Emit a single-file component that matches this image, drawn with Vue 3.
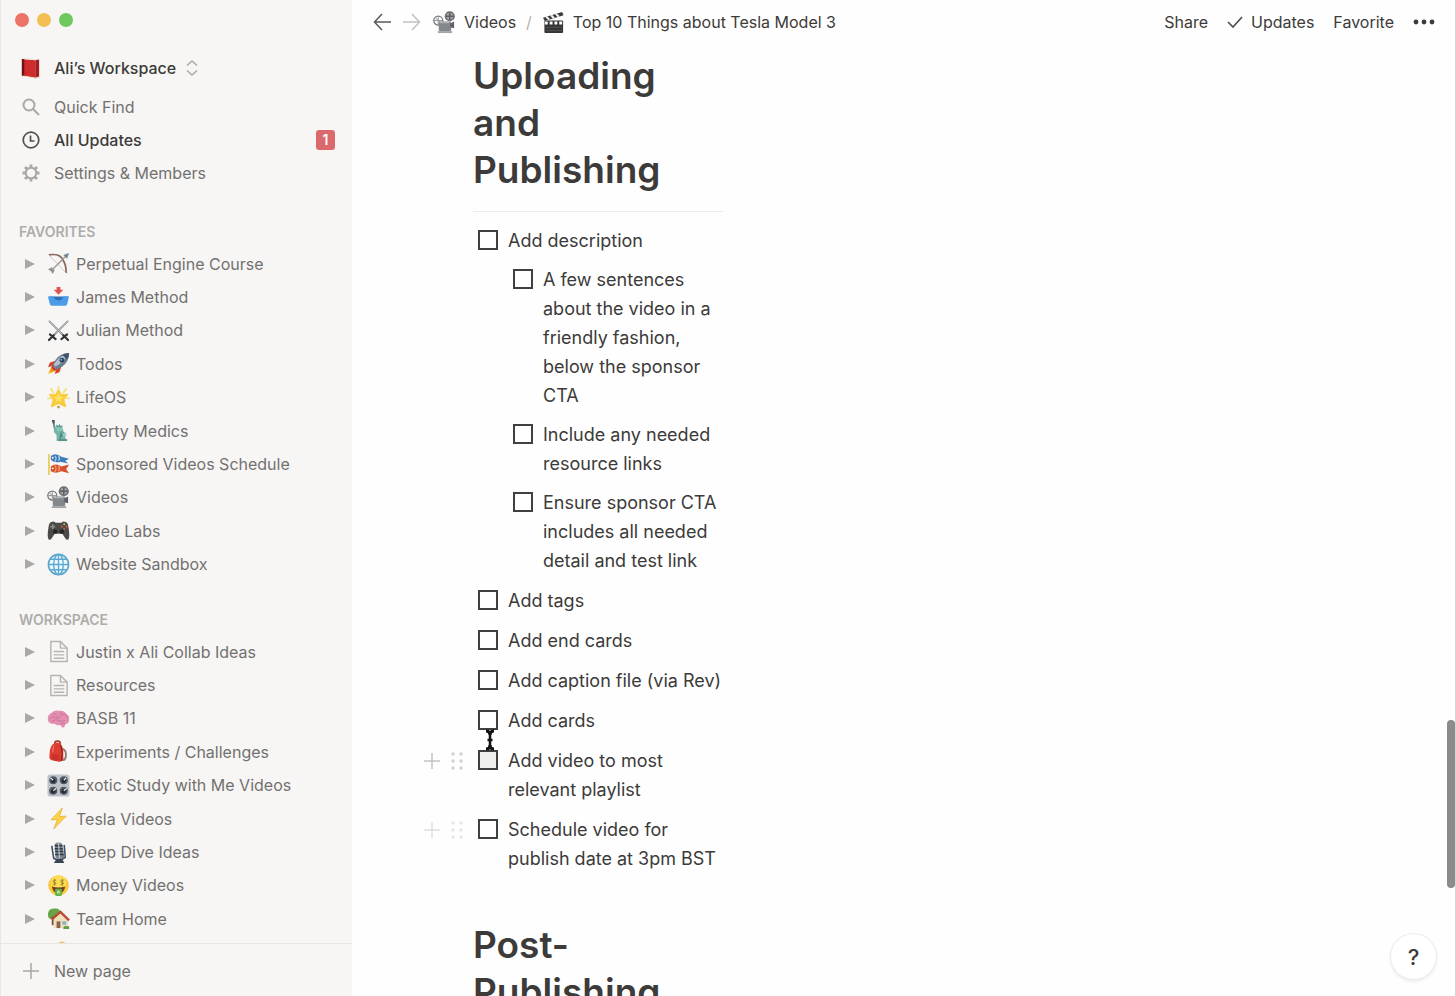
<script setup>
import { ref } from 'vue'

// 24x24 artwork for the page icons
const art = {
  book: `<path d="M3 2 L17 3.500 L17 22 L3 19.500 Z" fill="#cf2a2c"/><path d="M3 2 L6 1 L21 2.500 L17 3.500 Z" fill="#e8e0d8"/><path d="M17 3.500 L21 2.500 L21 21 L17 22.500 Z" fill="#a51c20"/><path d="M3 2 L5.500 2.300 L5.500 20 L3 19.500 Z" fill="#6d1215"/><path d="M4 19.800 L17 22 L21 20.700" stroke="#efe6dc" stroke-width="1" fill="none"/>`,
  bow: `<path d="M2 3 Q14 1 17 9 Q20 13 20 22" fill="none" stroke="#8a6a60" stroke-width="1.800"/><path d="M2 3 L20 22" stroke="#c9b7b3" stroke-width=".8"/><path d="M5 19 L20 4" stroke="#a0989a" stroke-width="1.500"/><path d="M23 1 L17 3 L21 7 Z" fill="#77878f"/><path d="M1 18 L5 16 L8 19 L6 23 L4 20 Z" fill="#9b9496"/>`,
  inbox: `<path d="M10 1 H14 V4 H17 L12 9 L7 4 H10 Z" fill="#e3534e"/><path d="M2 11 H22 L20 17 H4 Z" fill="#2f6fb4"/><path d="M1 11 H7 Q8 15 12 15 Q16 15 17 11 H23 L21 19 Q20.500 20.500 19 20.500 H5 Q3.500 20.500 3 19 Z" fill="#4b9be8"/>`,
  swords: `<path d="M2 2 L18 18 M22 2 L6 18" stroke="#8d9092" stroke-width="1.900"/><path d="M2 2 L15 15 M22 2 L9 15" stroke="#d7d9da" stroke-width=".6"/><path d="M3 16 L9 21 M21 16 L15 21 M7 17 L2 22 M17 17 L22 22" stroke="#333335" stroke-width="2.200" stroke-linecap="round"/>`,
  rocket: `<path d="M4 16 L1 23 L9 20 Z" fill="#f6c52e"/><path d="M5 16 L3 21 L8 19 Z" fill="#f47d27"/><path d="M9 9 L3 11 L1 16 L7 14 Z M15 15 L13 21 L8 23 L10 17 Z" fill="#d9442e"/><path d="M23 1 Q14 1 9 8 L5.500 14 L10 18.500 L16 15 Q23 10 23 1 Z" fill="#6c7e90"/><path d="M22 2 Q15 3 10 9 L7 13 L9 15 Q17 11 22 2 Z" fill="#b6c1ca"/><path d="M23 1 Q19 1 16 3 L21 8 Q23 5 23 1 Z" fill="#40556b"/><circle cx="15.500" cy="8.500" r="2.500" fill="#263e5a"/><circle cx="15" cy="8" r="1" fill="#7cb6dd"/><path d="M5 15 L9 19" stroke="#b8322b" stroke-width="2"/>`,
  star: `<path d="M12 4 L14.500 9.500 L21 9 L17 14 L19 21 L12 17.500 L5 21 L7 14 L3 9 L9.500 9.500 Z" fill="#f8cc3e" stroke="#f8cc3e" stroke-width="2" stroke-linejoin="round"/><path d="M12 7 L13.500 11 L17 11.500 L14 14 L15 17 L12 15.500 L9 17 L10 14 L7 11.500 L10.500 11 Z" fill="#fbe45f"/><path d="M12 1 V4 M4 3 L7 7 M20 3 L17 7 M1 13 H4 M23 13 H20" stroke="#f4df7d" stroke-width="1.800" stroke-linecap="round"/><circle cx="12" cy="22" r="1.500" fill="#c99b38"/>`,
  liberty: `<path d="M7 5 L9 14" stroke="#5d958c" stroke-width="2"/><path d="M5 1 L8 1 L8 5 L6 5 Z" fill="#3d5755"/><path d="M8 9 L12 8 L16 9 L18 15 L20 23 H10 L10 17 L7 13 Z" fill="#76b5a9"/><circle cx="13" cy="10" r="3" fill="#88c7ba"/><path d="M9 8 L10 6 L12 7 L13 5 L14 7 L17 7 L15 9 Z" fill="#5d9e92"/><path d="M15 13 L13 23 M18 14 L14 19" stroke="#4b857c" stroke-width="1.200"/><path d="M16 15 L20 14 L20 18 L17 18 Z" fill="#98cfc4"/><path d="M12 22 H21" stroke="#579186" stroke-width="2"/>`,
  koi: `<path d="M2 1 V23" stroke="#e8c33b" stroke-width="1.500"/><path d="M4 3 Q9 -1 15 4 L23 6 L19 8 L22 11 L14 9 Q8 11 4 7 Z" fill="#3d7dba"/><path d="M8 3 Q11 5 8 9 M12 3 Q14 5 12 8" stroke="#b7d7f0" stroke-width="1.200" fill="none"/><path d="M4 14 Q9 10 15 14 L23 12 L20 17 L23 21 L15 19 Q9 22 4 19 Z" fill="#d9502f"/><path d="M8 13 Q11 16 8 20 M12 13 Q14 16 12 19" stroke="#f2a56f" stroke-width="1.200" fill="none"/><circle cx="6" cy="5" r="1" fill="#fff"/><circle cx="6" cy="16" r="1" fill="#fff"/>`,
  projector: `<circle cx="17.500" cy="5.500" r="5.300" fill="#6c6e71"/><circle cx="17.500" cy="5.500" r="3.600" fill="#a2a5a8"/><path d="M17.500 1.500 V9.500 M13.500 5.500 H21.500" stroke="#5d5f62" stroke-width="1.500"/><circle cx="5.500" cy="10" r="4.700" fill="none" stroke="#77797c" stroke-width="1.300"/><path d="M5.500 5.500 V14.500 M1 10 H10 M2.500 7 L8.500 13" stroke="#8f9295" stroke-width="1"/><rect x="6" y="11" width="13" height="10" rx="1.500" fill="#84888d"/><path d="M7 12 H17" stroke="#b1b5b9" stroke-width="1.500"/><path d="M18 13 L22 11 V18 L18 17 Z" fill="#5e6165"/><path d="M5 21 H20 V23 H5 Z" fill="#a2a5a8"/>`,
  gamepad: `<path d="M5 3 Q7 2 9 4 H15 Q17 2 19 3 Q22 3 22.500 9 Q24 18 22.500 21 Q21 22.500 19 20 L16 15.500 H8 L5 20 Q3 22.500 1.500 21 Q0 18 1.500 9 Q2 3 5 3 Z" fill="#4b4a48"/><path d="M3.500 8 H8.500 M6 5.500 V10.500" stroke="#8b8a86" stroke-width="1.700"/><circle cx="18" cy="5.500" r="1.100" fill="#b3c055"/><circle cx="20.500" cy="8" r="1.100" fill="#d8504a"/><circle cx="15.500" cy="8" r="1.100" fill="#c55449"/><circle cx="18" cy="10.500" r="1.100" fill="#c0575a"/><circle cx="8.500" cy="13" r="2.300" fill="#252525"/><circle cx="15.500" cy="13" r="2.300" fill="#252525"/>`,
  globe: `<circle cx="12" cy="12" r="10.500" fill="#edf8fd" stroke="#5ba8cf" stroke-width="1.700"/><ellipse cx="12" cy="12" rx="5" ry="10.500" fill="none" stroke="#5ba8cf" stroke-width="1.400"/><path d="M12 1.500 V22.500 M1.500 12 H22.500 M3.500 6.500 H20.500 M3.500 17.500 H20.500" stroke="#5ba8cf" stroke-width="1.400"/>`,
  page: `<path d="M4 1.500 H14 L21 8.500 V22.500 H4 Z" fill="none" stroke="#b7b5b2" stroke-width="1.500"/><path d="M14 1.500 V8.500 H21 M7 12 H18 M7 15.500 H18 M7 19 H18" fill="none" stroke="#b7b5b2" stroke-width="1.500"/>`,
  brain: `<path d="M1 14 Q0 8 5 6 Q8 2.500 13 4 Q18 3.500 20 7 Q24 9 23 14 Q23 17 19 18 L18 21 Q15 22.500 14 18.500 Q10 20 8 17.500 Q2 18 1 14 Z" fill="#e58fb0"/><path d="M3 12 Q6 9 9 11 T15 9 M6 7 Q9 7 10 9 M14 5 Q14 8 18 8 T21 12 M5 15 Q9 12 12 14 T19 14 M14 18 Q16 16 19 18" fill="none" stroke="#c9719a" stroke-width="1"/>`,
  backpack: `<path d="M16 9 Q21 11 19.500 18 Q19 21 16 21" fill="none" stroke="#987b70" stroke-width="2"/><path d="M8 4 Q8 1 11 1 Q14 1 14 4" fill="none" stroke="#a82a22" stroke-width="1.700"/><path d="M3 11 Q4 3 11 2.500 Q16 3.500 17 11 L17 20 Q16 23 11 22.500 L5 21 Q2 20 2.500 17 Z" fill="#dc3d2f"/><path d="M5 14 Q10 16 13 15 L13 21 Q9 22 5 20 Z" fill="#c9332a"/><path d="M7 6 Q6 10 6 13" stroke="#ef7a67" stroke-width="1.200" fill="none"/><path d="M14 5 Q17 12 15 22" stroke="#8f1e1a" stroke-width="1.200" fill="none"/>`,
  knobs: `<rect x=".5" y=".5" width="23" height="23" rx="3" fill="#bfc3c9"/><circle cx="6.500" cy="6.500" r="4.200" fill="#515a64"/><circle cx="17.500" cy="6.500" r="4.200" fill="#515a64"/><circle cx="6.500" cy="17.500" r="4.200" fill="#515a64"/><circle cx="17.500" cy="17.500" r="4.200" fill="#515a64"/><circle cx="6.500" cy="7" r="2.300" fill="#24292f"/><circle cx="17.500" cy="7" r="2.300" fill="#24292f"/><circle cx="6.500" cy="18" r="2.300" fill="#24292f"/><circle cx="17.500" cy="18" r="2.300" fill="#24292f"/><path d="M6.500 6.500 L3.500 4 M17.500 6.500 L20 4 M6.500 17.500 L9.500 15 M17.500 17.500 L20.500 15" stroke="#eef0f2" stroke-width="1.200"/>`,
  bolt: `<path d="M16 1 L4 13.500 L11 13 L7 23 L20 9.500 L13 10 Z" fill="#fbd345" stroke="#ecaf3e" stroke-width=".9" stroke-linejoin="round"/>`,
  mic: `<path d="M8 3 Q12 0 16 3 L18 17 Q14 20 9 18 Z" fill="#7d868f"/><path d="M8 5 H16 M8 8 H16.500 M8.500 11 H17 M8.500 14 H17.500" stroke="#2d3946" stroke-width="1.600"/><path d="M5 5 L7 18 Q13 22 19 17 L18 4" fill="none" stroke="#445263" stroke-width="1.700"/><path d="M12 2 L13 18" stroke="#cfd4d9" stroke-width="1"/><path d="M10 19 H16 L18 23 H7 Z" fill="#384553"/>`,
  money: `<circle cx="12" cy="12" r="10.800" fill="#f9cb3c"/><circle cx="12" cy="9.500" r="8" fill="#fcdd55"/><path d="M5 13 Q12 15 19 13 Q18 20 12 20 Q6 20 5 13 Z" fill="#754020"/><rect x="8.500" y="15.500" width="7" height="7.500" rx="1.500" fill="#61b34c"/><path d="M9.500 6.500 Q6.500 5.500 6.500 7.500 T9 9.500 T6 11 M8 5 V12.500 M17.500 6.500 Q14.500 5.500 14.500 7.500 T17 9.500 T14 11 M16 5 V12.500" fill="none" stroke="#a08527" stroke-width="1"/><circle cx="12" cy="19" r="1.700" fill="#b2dd8e"/>`,
  home: `<path d="M1 8 Q1 1 8 1.500 Q14 1 14 7 Q12 13 6 13 Q1 13 1 8 Z" fill="#66a445"/><path d="M6 10 V19" stroke="#7a4b2e" stroke-width="2"/><path d="M7 12 L14 6 L22 13 V22 H7 Z" fill="#efe0bd"/><path d="M5 13 L14 5 L23 14" fill="none" stroke="#b94c37" stroke-width="2.500"/><rect x="10" y="15" width="4" height="7" fill="#90644a"/><rect x="16" y="15" width="4" height="3.500" fill="#7fb3cf"/><path d="M17 23 Q17 19 20 20 Q24 19 23 23 Z" fill="#669c47"/>`,
  hand: `<path d="M12 2 Q16 -1 19 2 L20 8 Q20 16 14 18 H8 L5 10 Z" fill="#efc75f"/>`,
  clapper: `<path d="M1 7 L21 1 L22.500 4.500 L3 10.500 Z" fill="#3b3b3b"/><path d="M4.500 6 L7.500 9 M9.500 4.500 L12.500 7.500 M14.500 3 L17.500 6" stroke="#f1f1f1" stroke-width="2.200"/><rect x="2.500" y="10" width="19.500" height="13" rx="1" fill="#353535"/><path d="M3 12.500 H22" stroke="#fff" stroke-width="3" stroke-dasharray="3 2"/><path d="M4 17 H21 M4 20.500 H21" stroke="#5a5b5c" stroke-width=".8"/>`,
}

const favorites = [
  { icon: 'bow', title: 'Perpetual Engine Course' },
  { icon: 'inbox', title: 'James Method' },
  { icon: 'swords', title: 'Julian Method' },
  { icon: 'rocket', title: 'Todos' },
  { icon: 'star', title: 'LifeOS' },
  { icon: 'liberty', title: 'Liberty Medics' },
  { icon: 'koi', title: 'Sponsored Videos Schedule' },
  { icon: 'projector', title: 'Videos' },
  { icon: 'gamepad', title: 'Video Labs' },
  { icon: 'globe', title: 'Website Sandbox' },
]

const workspace = [
  { icon: 'page', title: 'Justin x Ali Collab Ideas' },
  { icon: 'page', title: 'Resources' },
  { icon: 'brain', title: 'BASB 11' },
  { icon: 'backpack', title: 'Experiments / Challenges' },
  { icon: 'knobs', title: 'Exotic Study with Me Videos' },
  { icon: 'bolt', title: 'Tesla Videos' },
  { icon: 'mic', title: 'Deep Dive Ideas' },
  { icon: 'money', title: 'Money Videos' },
  { icon: 'home', title: 'Team Home' },
  { icon: 'hand', title: '' },
]

const sections = [
  { name: 'FAVORITES', pages: favorites },
  { name: 'WORKSPACE', pages: workspace },
]

const todos = ref([
  {
    text: 'Add description',
    done: false,
    children: [
      { text: 'A few sentences about the video in a friendly fashion, below the sponsor CTA', done: false },
      { text: 'Include any needed resource links', done: false },
      { text: 'Ensure sponsor CTA includes all needed detail and test link', done: false },
    ],
  },
  { text: 'Add tags', done: false },
  { text: 'Add end cards', done: false },
  { text: 'Add caption file (via Rev)', done: false },
  { text: 'Add cards', done: false, cursor: true },
  { text: 'Add video to most relevant playlist', done: false, handles: true, hovered: true },
  { text: 'Schedule video for publish date at 3pm BST', done: false, handles: true, fading: true },
])
</script>

<template>
  <div class="window">
    <aside class="sidebar">
      <div class="lights">
        <button class="light red" aria-label="Close"></button>
        <button class="light yellow" aria-label="Minimize"></button>
        <button class="light green" aria-label="Zoom"></button>
      </div>

      <button class="switcher">
        <svg class="emoji" viewBox="0 0 24 24" v-html="art.book" />
        <span>Ali’s Workspace</span>
        <svg class="updown" viewBox="0 0 12 18" fill="none">
          <path d="M1 6.500 L6 2 L11 6.500 M1 11.500 L6 16 L11 11.500" stroke="#aaa8a5" stroke-width="1.500" />
        </svg>
      </button>

      <nav class="shortcuts">
        <a href="#" class="shortcut">
          <svg class="glyph" viewBox="0 0 18 18" fill="none" stroke="#aaa8a5" stroke-width="2">
            <circle cx="7" cy="7" r="5.500" />
            <path d="M11 11 L17 17" />
          </svg>
          <span>Quick Find</span>
        </a>
        <a href="#" class="shortcut active">
          <svg class="glyph" viewBox="0 0 18 18" fill="none" stroke="#50504e" stroke-width="1.700">
            <circle cx="9" cy="9" r="7.800" />
            <path d="M8.500 4.500 V10 H12.500" />
          </svg>
          <span>All Updates</span>
          <b class="badge">1</b>
        </a>
        <a href="#" class="shortcut">
          <svg class="glyph" viewBox="0 0 18 18" fill="none" stroke="#aaa8a5">
            <circle cx="9" cy="9" r="5.300" stroke-width="2" />
            <path
              d="M9 .5 V3.500 M9 14.500 V17.500 M.5 9 H3.500 M14.500 9 H17.500 M3 3 L5 5 M13 13 L15 15 M3 15 L5 13 M13 5 L15 3"
              stroke-width="2.800"
            />
          </svg>
          <span>Settings &amp; Members</span>
        </a>
      </nav>

      <div class="tree">
        <section v-for="section in sections" :key="section.name">
          <h2 class="section-title">{{ section.name }}</h2>
          <ul class="pages">
            <li v-for="(page, i) in section.pages" :key="i" class="page">
              <button class="toggle" aria-label="Expand">
                <svg viewBox="0 0 10 10"><path d="M0 0 L10 5 L0 10 Z" fill="#aaa8a5" /></svg>
              </button>
              <a href="#" class="page-link">
                <svg class="emoji" viewBox="0 0 24 24" v-html="art[page.icon]" />
                <span>{{ page.title }}</span>
              </a>
            </li>
          </ul>
        </section>
      </div>

      <button class="new-page">
        <svg class="glyph" viewBox="0 0 18 18" stroke="#aaa8a5" stroke-width="1.500">
          <path d="M9 1 V17 M1 9 H17" />
        </svg>
        <span>New page</span>
      </button>
    </aside>

    <main class="main">
      <header class="topbar">
        <button class="arrow" aria-label="Back">
          <svg viewBox="0 0 18 18" fill="none" stroke="#5a5957" stroke-width="1.500">
            <path d="M18 9 H1.500 M9 1 L1.500 9 L9 17" />
          </svg>
        </button>
        <button class="arrow" aria-label="Forward">
          <svg viewBox="0 0 18 18" fill="none" stroke="#c2c1bf" stroke-width="1.500">
            <path d="M0 9 H16.500 M9 1 L16.500 9 L9 17" />
          </svg>
        </button>
        <a href="#" class="crumb">
          <svg class="emoji" viewBox="0 0 24 24" v-html="art.projector" />
          <span>Videos</span>
        </a>
        <span class="slash">/</span>
        <a href="#" class="crumb">
          <svg class="emoji" viewBox="0 0 24 24" v-html="art.clapper" />
          <span>Top 10 Things about Tesla Model 3</span>
        </a>
        <div class="actions">
          <button>Share</button>
          <button class="updates">
            <svg viewBox="0 0 16 12" fill="none"><path d="M1 6 L6 11 L15 1" stroke="#50504e" stroke-width="1.700" /></svg>
            Updates
          </button>
          <button>Favorite</button>
          <button class="more" aria-label="More">
            <svg viewBox="0 0 22 6" fill="#3c3b39">
              <circle cx="3" cy="3" r="2.400" />
              <circle cx="11" cy="3" r="2.400" />
              <circle cx="19" cy="3" r="2.400" />
            </svg>
          </button>
        </div>
      </header>

      <article class="doc">
        <h1>Uploading and Publishing</h1>
        <hr />
        <ul class="todos">
          <li v-for="(todo, i) in todos" :key="i" class="todo">
            <div class="gutter" :class="{ fading: todo.fading }">
              <template v-if="todo.handles">
                <button aria-label="Add block">
                  <svg width="18" height="18" viewBox="0 0 18 18" stroke="#c4c3c1" stroke-width="1.500">
                    <path d="M9 1 V17 M1 9 H17" />
                  </svg>
                </button>
                <button aria-label="Drag block">
                  <svg width="12" height="18" viewBox="0 0 12 18" fill="#d2d1cf">
                    <circle v-for="n in 6" :key="n" :cx="n % 2 ? 2 : 10" :cy="Math.ceil(n / 2) * 7 - 5" r="1.700" />
                  </svg>
                </button>
              </template>
            </div>
            <div class="todo-body">
              <label class="check-row">
                <input v-model="todo.done" type="checkbox" :class="{ hovered: todo.hovered }" />
                <span>{{ todo.text }}</span>
              </label>
              <ul v-if="todo.children" class="children">
                <li v-for="(child, j) in todo.children" :key="j">
                  <label class="check-row">
                    <input v-model="child.done" type="checkbox" />
                    <span>{{ child.text }}</span>
                  </label>
                </li>
              </ul>
              <svg v-if="todo.cursor" class="ibeam" viewBox="0 0 12 22" fill="none" stroke="#111">
                <path d="M2 2 Q6 2 6 6 Q6 2 10 2 M2 20 Q6 20 6 16 Q6 20 10 20" stroke-width="3" />
                <path d="M6 4 V18 M3.500 11 H8.500" stroke-width="2.500" />
              </svg>
            </div>
          </li>
        </ul>
        <h1 class="next">Post-Publishing</h1>
      </article>

      <div class="scrollbar"></div>
      <button class="help">?</button>
    </main>
  </div>
</template>

<style>
body {
  margin: 0;
  background: #fff;
}
</style>

<style scoped>
.window {
  display: flex;
  height: 100vh;
  overflow: hidden;
  box-sizing: border-box;
  border-left: 1px solid #ece4e6;
  border-right: 1px solid #d3d5df;
  background: #fefefe;
  color: #3c3b39;
  font: 16px/24px Inter, 'Liberation Sans', sans-serif;
}
button {
  padding: 0;
  border: 0;
  background: none;
  color: inherit;
  font: inherit;
  cursor: pointer;
}
a {
  color: inherit;
  text-decoration: none;
}
ul {
  margin: 0;
  padding: 0;
  list-style: none;
}
svg {
  display: block;
  flex: none;
}
.emoji {
  width: 23px;
  height: 23px;
}
.glyph {
  width: 18px;
  height: 18px;
}

/* sidebar */
.sidebar {
  display: flex;
  flex: none;
  flex-direction: column;
  width: 351px;
  background: #f7f6f5;
  color: #73716f;
}
.lights {
  display: flex;
  flex: none;
  align-items: center;
  gap: 8px;
  height: 40px;
  padding-left: 14px;
}
.light {
  width: 14px;
  height: 14px;
  border-radius: 50%;
}
.red {
  background: #ec7367;
}
.yellow {
  background: #f3bf55;
}
.green {
  background: #6fc75f;
}
.switcher {
  display: flex;
  flex: none;
  align-items: center;
  height: 40px;
  margin-top: 8px;
  padding-left: 18px;
  color: #3c3b39;
  font-weight: 500;
}
.switcher span {
  margin: 0 10px 0 12px;
}
.updown {
  width: 12px;
  height: 18px;
}
.shortcuts {
  flex: none;
  display: grid;
  grid-auto-rows: 1fr;
  height: 100px;
  padding: 2px 0 3px;
}
.shortcut {
  display: flex;
  align-items: center;
  gap: 14px;
  padding: 0 17px 0 21px;
}
.active {
  color: #3c3b39;
  font-weight: 500;
}
.badge {
  width: 19px;
  height: 20px;
  margin-left: auto;
  border-radius: 3px;
  background: #d9696b;
  color: #fff;
  font-size: 14px;
  font-weight: 600;
  line-height: 20px;
  text-align: center;
}
.tree {
  flex: 1;
  min-height: 0;
  overflow: hidden;
}
.section-title {
  margin: 0;
  padding: 29px 0 5px 18px;
  color: #aeaca9;
  font-size: 14px;
  font-weight: 600;
  line-height: 20px;
}
.pages {
  display: grid;
  grid-auto-rows: 1fr;
  height: 334px;
}
.page {
  display: flex;
  align-items: center;
}
.toggle {
  padding: 4px 12px 4px 24px;
}
.toggle svg {
  width: 10px;
  height: 10px;
}
.page-link {
  display: flex;
  align-items: center;
  gap: 6px;
}
.new-page {
  display: flex;
  flex: none;
  align-items: center;
  gap: 14px;
  height: 53px;
  padding: 2px 0 0 21px;
  border-top: 1px solid #e6e5e4;
}

/* main column */
.main {
  position: relative;
  flex: 1;
  min-width: 0;
}
.topbar {
  display: flex;
  align-items: center;
  height: 44px;
  padding: 0 20px 0 21px;
}
.arrow {
  margin-right: 12px;
}
.arrow svg {
  width: 18px;
  height: 18px;
}
.crumb {
  display: flex;
  align-items: center;
  gap: 8px;
}
.slash {
  margin: 0 10px;
  color: #b5b4b2;
}
.actions {
  display: flex;
  align-items: center;
  gap: 19px;
  margin-left: auto;
}
.updates {
  display: flex;
  align-items: center;
  gap: 8px;
}
.updates svg {
  width: 16px;
  height: 12px;
}
.more svg {
  width: 22px;
  height: 6px;
}
.doc {
  width: 300px;
  padding: 8px 0 0 71px;
  font-size: 18px;
  line-height: 29px;
}
h1 {
  width: 200px;
  margin: 0 0 0 50px;
  font-size: 37px;
  font-weight: 600;
  line-height: 47px;
}
hr {
  height: 1px;
  margin: 18px 0 14px 50px;
  border: 0;
  background: #ebebea;
}
.todos {
  display: grid;
  gap: 11px;
}
.todo {
  display: flex;
}
.gutter {
  display: flex;
  flex: none;
  align-items: center;
  gap: 10px;
  width: 55px;
  height: 29px;
}
.fading {
  opacity: 0.5;
}
.todo-body {
  position: relative;
}
.check-row {
  display: flex;
  gap: 10px;
}
.check-row input {
  appearance: none;
  flex: none;
  width: 20px;
  height: 20px;
  margin: 4px 0 0;
  border: 2px solid #40403f;
  background: #fff;
}
.check-row input.hovered {
  background: #efefee;
}
.check-row input:checked {
  background: #2eaadc;
}
.children {
  display: grid;
  gap: 10px;
  padding: 10px 0 0 35px;
}
.ibeam {
  position: absolute;
  z-index: 1;
  top: 23px;
  left: 6px;
  width: 12px;
  height: 22px;
}
.next {
  margin-top: 48px;
}
.scrollbar {
  position: absolute;
  right: 0;
  bottom: 108px;
  width: 8px;
  height: 168px;
  border-radius: 4px;
  background: #8b8b8b;
}
.help {
  position: absolute;
  right: 19px;
  bottom: 17px;
  width: 45px;
  height: 45px;
  border-radius: 50%;
  background: #fff;
  box-shadow: 0 0 0 1px #ececec, 0 2px 4px rgba(15, 15, 15, 0.1);
  font-size: 22px;
  font-weight: 500;
}
</style>
